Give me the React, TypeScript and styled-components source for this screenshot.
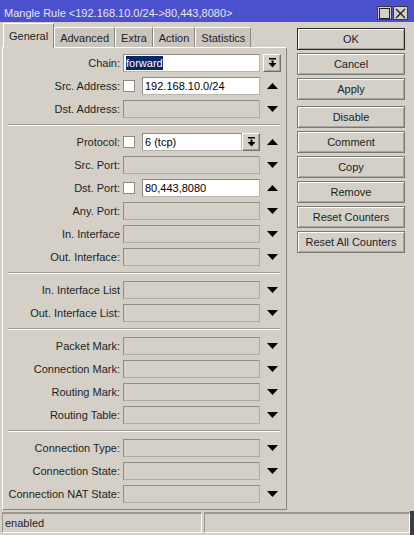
import { createGlobalStyle, styled } from 'styled-components'

const GlobalStyle = createGlobalStyle`
  html, body {
    margin: 0;
    padding: 0;
    background: #d4d0c8;
  }
  body {
    font-family: "Liberation Sans", Arial, sans-serif;
    font-size: 11px;
    color: #1e1e1e;
  }
`

type FieldKind = 'chain' | 'check' | 'protocol' | 'empty'
type Arrow = 'up' | 'down' | 'none'

type FormRow =
  | { kind: 'row'; label: string; field: FieldKind; value?: string; arrow: Arrow }
  | { kind: 'sep' }

const rows: FormRow[] = [
  { kind: 'row', label: 'Chain:', field: 'chain', value: 'forward', arrow: 'none' },
  { kind: 'row', label: 'Src. Address:', field: 'check', value: '192.168.10.0/24', arrow: 'up' },
  { kind: 'row', label: 'Dst. Address:', field: 'empty', arrow: 'down' },
  { kind: 'sep' },
  { kind: 'row', label: 'Protocol:', field: 'protocol', value: '6 (tcp)', arrow: 'up' },
  { kind: 'row', label: 'Src. Port:', field: 'empty', arrow: 'down' },
  { kind: 'row', label: 'Dst. Port:', field: 'check', value: '80,443,8080', arrow: 'up' },
  { kind: 'row', label: 'Any. Port:', field: 'empty', arrow: 'down' },
  { kind: 'row', label: 'In. Interface', field: 'empty', arrow: 'down' },
  { kind: 'row', label: 'Out. Interface:', field: 'empty', arrow: 'down' },
  { kind: 'sep' },
  { kind: 'row', label: 'In. Interface List', field: 'empty', arrow: 'down' },
  { kind: 'row', label: 'Out. Interface List:', field: 'empty', arrow: 'down' },
  { kind: 'sep' },
  { kind: 'row', label: 'Packet Mark:', field: 'empty', arrow: 'down' },
  { kind: 'row', label: 'Connection Mark:', field: 'empty', arrow: 'down' },
  { kind: 'row', label: 'Routing Mark:', field: 'empty', arrow: 'down' },
  { kind: 'row', label: 'Routing Table:', field: 'empty', arrow: 'down' },
  { kind: 'sep' },
  { kind: 'row', label: 'Connection Type:', field: 'empty', arrow: 'down' },
  { kind: 'row', label: 'Connection State:', field: 'empty', arrow: 'down' },
  { kind: 'row', label: 'Connection NAT State:', field: 'empty', arrow: 'down' },
]

const tabs = ['General', 'Advanced', 'Extra', 'Action', 'Statistics']

const buttons = [
  ['OK', 'Cancel', 'Apply'],
  ['Disable', 'Comment', 'Copy', 'Remove', 'Reset Counters', 'Reset All Counters'],
]

function TriangleUp() {
  return (
    <svg width="11" height="6" viewBox="0 0 11 6">
      <polygon points="0,6 5.5,0 11,6" fill="#000" />
    </svg>
  )
}

function TriangleDown() {
  return (
    <svg width="11" height="6" viewBox="0 0 11 6">
      <polygon points="0,0 11,0 5.5,6" fill="#000" />
    </svg>
  )
}

function DropIcon() {
  return (
    <svg width="9" height="10" viewBox="0 0 9 10">
      <rect x="1" y="0" width="7" height="1.5" fill="#000" />
      <rect x="3.5" y="2.5" width="2" height="2.5" fill="#000" />
      <polygon points="0.5,5 8.5,5 4.5,9.5" fill="#000" />
    </svg>
  )
}

function Field({ row }: { row: Extract<FormRow, { kind: 'row' }> }) {
  if (row.field === 'chain') {
    return (
      <FieldBox>
        <TextInput $grow>
          <Selected>{row.value}</Selected>
        </TextInput>
      </FieldBox>
    )
  }
  if (row.field === 'check' || row.field === 'protocol') {
    return (
      <FieldBox>
        <Check />
        <TextInput $grow>{row.value}</TextInput>
        {row.field === 'protocol' && (
          <DropButton $narrow>
            <DropIcon />
          </DropButton>
        )}
      </FieldBox>
    )
  }
  return (
    <FieldBox>
      <DisabledInput />
    </FieldBox>
  )
}

export default function App() {
  return (
    <>
      <GlobalStyle />
      <Window>
        <TitleBar>
          <TitleText>Mangle Rule &lt;192.168.10.0/24-&gt;80,443,8080&gt;</TitleText>
          <TitleButtons>
            <TitleButton>
              <svg width="11" height="11" viewBox="0 0 11 11">
                <rect x="0.5" y="0.5" width="10" height="10" fill="none" stroke="#222" />
              </svg>
            </TitleButton>
            <TitleButton>
              <svg width="11" height="11" viewBox="0 0 11 11">
                <path d="M1 1 L10 10 M10 1 L1 10" stroke="#222" strokeWidth="1.4" />
              </svg>
            </TitleButton>
          </TitleButtons>
        </TitleBar>

        <Main>
          <LeftColumn>
            <TabStrip>
              {tabs.map((tab, i) => (
                <Tab key={tab} $active={i === 0}>
                  {tab}
                </Tab>
              ))}
            </TabStrip>
            <Panel>
              {rows.map((row, i) =>
                row.kind === 'sep' ? (
                  <Separator key={i} />
                ) : (
                  <Row key={i}>
                    <Label>{row.label}</Label>
                    <Field row={row} />
                    <Trail>
                      {row.field === 'chain' && (
                        <DropButton>
                          <DropIcon />
                        </DropButton>
                      )}
                      {row.arrow === 'up' && <TriangleUp />}
                      {row.arrow === 'down' && <TriangleDown />}
                    </Trail>
                  </Row>
                )
              )}
            </Panel>
          </LeftColumn>

          <ButtonColumn>
            {buttons.map((group, gi) => (
              <ButtonGroup key={gi}>
                {group.map((label) => (
                  <ActionButton key={label} $primary={label === 'OK'}>
                    {label}
                  </ActionButton>
                ))}
              </ButtonGroup>
            ))}
          </ButtonColumn>
        </Main>

        <StatusBar>
          <StatusCell $width={200}>enabled</StatusCell>
          <StatusCell $width={206} />
        </StatusBar>
      </Window>
    </>
  )
}

const Window = styled.div`
  width: 414px;
  height: 535px;
  display: flex;
  flex-direction: column;
  background: #d4d0c8;
  overflow: hidden;
`

const TitleBar = styled.div`
  height: 22px;
  padding: 4px 6px 0 4px;
  box-sizing: border-box;
  background: #4b50cd;
  display: flex;
  align-items: center;
  justify-content: space-between;
`

const TitleText = styled.div`
  color: #e6e6f2;
  font-size: 11px;
  white-space: nowrap;
`

const TitleButtons = styled.div`
  display: flex;
  gap: 1px;
`

const TitleButton = styled.div`
  width: 15px;
  height: 14px;
  box-sizing: border-box;
  background: #d4d0c8;
  border: 1px solid #3a3a3a;
  display: flex;
  align-items: center;
  justify-content: center;
`

const Main = styled.div`
  flex: 1;
  display: flex;
`

const LeftColumn = styled.div`
  width: 285px;
  margin-left: 2px;
  display: flex;
  flex-direction: column;
`

const TabStrip = styled.div`
  height: 25px;
  padding-left: 1px;
  display: flex;
  align-items: flex-end;
`

const Tab = styled.div<{ $active?: boolean }>`
  height: ${({ $active }) => ($active ? '25px' : '20px')};
  margin-bottom: ${({ $active }) => ($active ? '-1px' : '0')};
  padding: 0 5px;
  box-sizing: border-box;
  display: flex;
  align-items: center;
  background: ${({ $active }) => ($active ? '#d4d0c8' : '#cac6be')};
  border-top: 1px solid #fff;
  border-left: 1px solid #fff;
  border-right: 1px solid #8a8780;
  color: #1e1e1e;
  position: relative;
  z-index: ${({ $active }) => ($active ? 1 : 0)};
`

const Panel = styled.div`
  flex: 1;
  margin-bottom: 1px;
  padding-top: 3px;
  box-sizing: border-box;
  border-top: 1px solid #fff;
  border-left: 1px solid #fff;
  border-right: 1px solid #8a8780;
  border-bottom: 1px solid #8a8780;
  display: flex;
  flex-direction: column;
`

const Row = styled.div`
  height: 23px;
  display: flex;
  align-items: center;
`

const Label = styled.div`
  width: 117px;
  margin-right: 3px;
  text-align: right;
  white-space: nowrap;
  color: #1e1e1e;
`

const FieldBox = styled.div`
  width: 137px;
  height: 18px;
  display: flex;
  align-items: center;
`

const TextInput = styled.div<{ $grow?: boolean }>`
  flex: ${({ $grow }) => ($grow ? 1 : 'none')};
  height: 18px;
  box-sizing: border-box;
  padding-left: 2px;
  background: #fff;
  border: 1px solid #8e8c86;
  border-bottom-color: #b8b5ae;
  border-right-color: #b8b5ae;
  display: flex;
  align-items: center;
  color: #000;
  white-space: nowrap;
`

const Selected = styled.span`
  background: #0a246a;
  color: #fff;
  line-height: 14px;
`

const DisabledInput = styled.div`
  flex: 1;
  height: 18px;
  box-sizing: border-box;
  background: #d4d0c8;
  border: 1px solid #8e8c86;
  border-bottom-color: #aeaba4;
  border-right-color: #aeaba4;
`

const Check = styled.div`
  width: 12px;
  height: 12px;
  margin-right: 7px;
  box-sizing: border-box;
  background: #fff;
  border: 1px solid #8e8c86;
  flex: none;
`

const DropButton = styled.div<{ $narrow?: boolean }>`
  width: ${({ $narrow }) => ($narrow ? '18px' : '18px')};
  height: 18px;
  margin-left: ${({ $narrow }) => ($narrow ? '0' : '0')};
  flex: none;
  box-sizing: border-box;
  background: #d4d0c8;
  border: 1px solid #fff;
  border-right-color: #6f6d68;
  border-bottom-color: #6f6d68;
  box-shadow: inset -1px -1px 0 #a8a59e;
  display: flex;
  align-items: center;
  justify-content: center;
`

const Trail = styled.div`
  width: 20px;
  margin-left: 2px;
  height: 18px;
  display: flex;
  align-items: center;
  justify-content: center;
`

const Separator = styled.div`
  height: 10px;
  margin: 0 6px 0 5px;
  display: flex;
  flex-direction: column;
  justify-content: center;

  &::before {
    content: '';
    display: block;
    height: 1px;
    background: #a19e97;
  }
  &::after {
    content: '';
    display: block;
    height: 1px;
    background: #fff;
  }
`

const ButtonColumn = styled.div`
  margin-left: 10px;
  padding-top: 6px;
  width: 108px;
  display: flex;
  flex-direction: column;
  gap: 6px;
`

const ButtonGroup = styled.div`
  display: flex;
  flex-direction: column;
  gap: 3px;
`

const ActionButton = styled.div<{ $primary?: boolean }>`
  height: 22px;
  box-sizing: border-box;
  border: 1px solid ${({ $primary }) => ($primary ? '#2a2a2a' : '#7a7872')};
  box-shadow: inset 1px 1px 0 #fff, inset -1px -1px 0 #a8a59e;
  background: #d4d0c8;
  display: flex;
  align-items: center;
  justify-content: center;
  color: #1e1e1e;
  white-space: nowrap;
`

const StatusBar = styled.div`
  height: 24px;
  padding: 1px 0 2px 2px;
  box-sizing: border-box;
  display: flex;
  gap: 2px;
  border-right: 4px solid #3e3e3e;
`

const StatusCell = styled.div<{ $width: number }>`
  width: ${({ $width }) => $width}px;
  box-sizing: border-box;
  padding-left: 2px;
  border-top: 2px solid #9a978f;
  border-left: 1px solid #9a978f;
  border-right: 1px solid #fff;
  border-bottom: 1px solid #fff;
  display: flex;
  align-items: center;
  color: #1e1e1e;
`
